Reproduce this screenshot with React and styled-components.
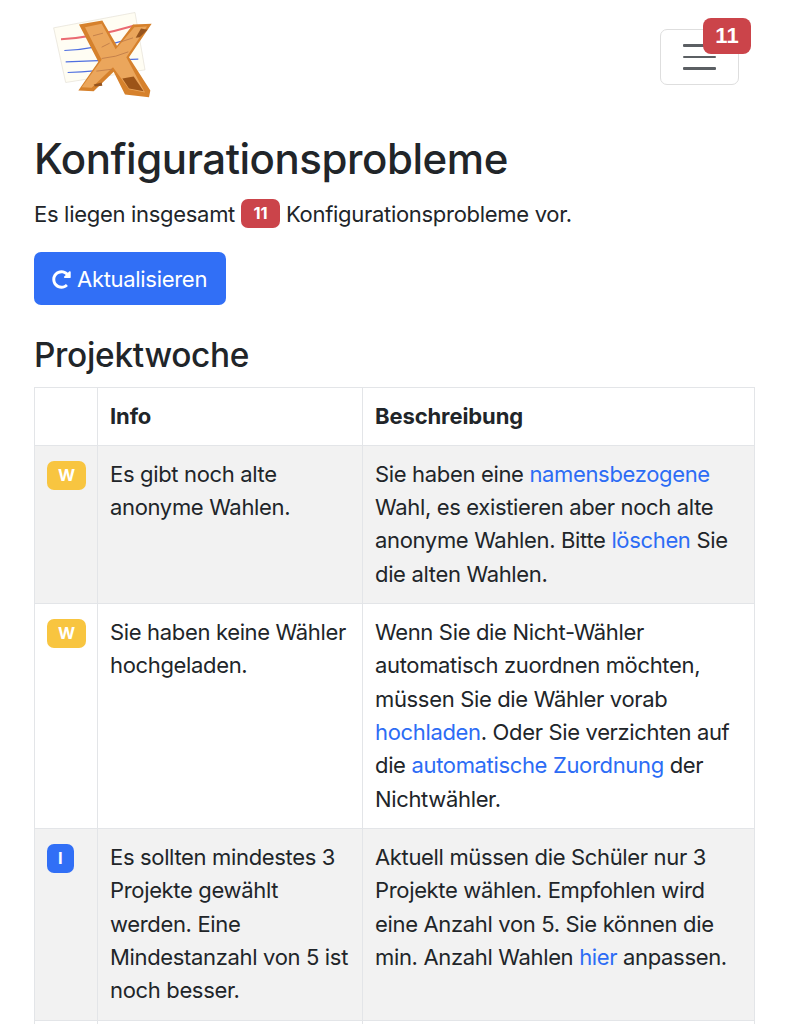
import React from "react";
import styled, { createGlobalStyle } from "styled-components";
import { FaRedoAlt } from "react-icons/fa";

const GlobalStyle = createGlobalStyle`
  html, body {
    margin: 0;
    padding: 0;
    height: 1024px;
    overflow: hidden;
    background: #fff;
  }
  body {
    font-family: Inter, "Liberation Sans", sans-serif;
    font-size: 22px;
    line-height: 33.33px;
    letter-spacing: -0.3px;
    color: #212529;
  }
`;

const NavBar = styled.nav`
  display: flex;
  align-items: flex-start;
  justify-content: space-between;
  height: 132px;
  padding: 12px 52px 0 53px;
  box-sizing: border-box;
`;

const Toggler = styled.button`
  position: relative;
  width: 79px;
  height: 56px;
  margin-top: 17px;
  padding: 0;
  display: flex;
  flex-direction: column;
  align-items: center;
  justify-content: center;
  gap: 9px;
  background: #fff;
  border: 1.5px solid #dedede;
  border-radius: 7px;
`;

const TogglerBar = styled.span`
  display: block;
  width: 33px;
  height: 2.5px;
  background: #5b5f63;
  border-radius: 1px;
`;

const NavBadge = styled.span`
  position: absolute;
  top: -12px;
  right: -13px;
  width: 48px;
  height: 36px;
  display: flex;
  align-items: center;
  justify-content: center;
  background: #cb444a;
  color: #fff;
  border-radius: 8px;
  font-size: 22px;
  font-weight: 700;
  letter-spacing: 0;
`;

const Main = styled.main`
  padding: 0 36px 0 34px;
`;

const Title = styled.h1`
  margin: 0 0 12px;
  font-size: 42px;
  line-height: 54px;
  font-weight: 500;
  letter-spacing: -0.45px;
`;

const Lead = styled.p`
  margin: 0 0 21px;
`;

const Pill = styled.span`
  display: inline-flex;
  align-items: center;
  justify-content: center;
  vertical-align: ${(p) => p.$raise || 1}px;
  height: 29px;
  padding: 0 ${(p) => p.$pad || 11}px;
  border-radius: 7px;
  background: ${(p) => p.$bg};
  color: #fff;
  font-size: 16.5px;
  line-height: 29px;
  font-weight: 700;
  letter-spacing: 0;
`;

const RefreshButton = styled.button`
  display: flex;
  align-items: center;
  gap: 6px;
  height: 53px;
  width: 192px;
  padding: 2px 0 0 18px;
  box-sizing: border-box;
  background: #316ff6;
  color: #fff;
  border: 0;
  border-radius: 7px;
  font: inherit;
  letter-spacing: inherit;
`;

const Subtitle = styled.h2`
  margin: 30px 0 12px;
  font-size: 33.4px;
  line-height: 40px;
  font-weight: 500;
  letter-spacing: -0.3px;
`;

const Table = styled.table`
  width: 721px;
  border-collapse: collapse;
  table-layout: fixed;
`;

const Row = styled.tr`
  background: ${(p) => (p.$striped ? "#f2f2f2" : "#fff")};
`;

const Cell = styled.td`
  border: 1px solid #e3e5e8;
  padding: 12px;
  vertical-align: top;
  letter-spacing: -0.34px;
`;

const HeadCell = styled(Cell).attrs({ as: "th" })`
  padding-bottom: 11px;
  text-align: left;
  font-weight: 700;
  font-size: 22px;
  letter-spacing: -0.1px;
`;

const Link = styled.a`
  color: #2c6cf5;
  text-decoration: none;
`;

function Logo() {
  return (
    <svg width="100" height="87" viewBox="70 35 300 260">
      <polygon points="72,82 316,36 346,208 108,246" fill="#fffdf3" stroke="#e4e0d4" strokeWidth="2" />
      <path d="M94 116 Q190 112 312 76" fill="none" stroke="#ea6a72" strokeWidth="6" />
      <path d="M104 150 Q200 146 312 112" fill="none" stroke="#4f6fe0" strokeWidth="3.5" />
      <path d="M108 184 Q210 180 326 176" fill="none" stroke="#4f6fe0" strokeWidth="3.5" />
      <path d="M114 216 Q200 214 260 200" fill="none" stroke="#4f6fe0" strokeWidth="3.5" />
      <polygon
        points="148,72 218,60 262,136 310,72 366,70 298,170 362,270 358,290 286,282 252,214 192,272 146,270 206,184"
        fill="#d6812c"
      />
      <polygon
        points="166,80 216,70 258,146 314,80 352,78 290,170 346,276 298,266 250,200 186,262 156,260 216,178"
        fill="#eba65c"
      />
      <path d="M190 106 L220 98 M216 140 L240 128 M274 124 L310 112 M216 174 Q260 170 296 154 M200 212 L248 206" fill="none" stroke="#bd7a48" strokeWidth="2.5" />
      <polygon points="318,112 334,84 354,88 330,110" fill="#96541e" />
      <polygon points="278,234 312,228 342,272 298,264" fill="#9c5418" />
      <polygon points="192,252 216,246 218,256 196,258" fill="#96541e" />
    </svg>
  );
}

export default function App() {
  return (
    <>
      <GlobalStyle />
      <NavBar>
        <Logo />
        <Toggler>
          <TogglerBar />
          <TogglerBar />
          <TogglerBar />
          <NavBadge>11</NavBadge>
        </Toggler>
      </NavBar>
      <Main>
        <Title>Konfigurationsprobleme</Title>
        <Lead>
          Es liegen insgesamt <Pill $bg="#cb444a" $pad={12.5} $raise={3}>11</Pill> Konfigurationsprobleme vor.
        </Lead>
        <RefreshButton>
          <FaRedoAlt size={19} />
          Aktualisieren
        </RefreshButton>
        <Subtitle>Projektwoche</Subtitle>
        <Table>
          <colgroup>
            <col style={{ width: 63 }} />
            <col style={{ width: 265 }} />
            <col />
          </colgroup>
          <tbody>
            <Row>
              <HeadCell />
              <HeadCell>Info</HeadCell>
              <HeadCell>Beschreibung</HeadCell>
            </Row>
            <Row $striped>
              <Cell><Pill $bg="#f8c540">W</Pill></Cell>
              <Cell>Es gibt noch alte anonyme Wahlen.</Cell>
              <Cell>
                Sie haben eine <Link>namensbezogene</Link> Wahl, es existieren aber noch alte anonyme Wahlen. Bitte <Link>löschen</Link> Sie die alten Wahlen.
              </Cell>
            </Row>
            <Row>
              <Cell><Pill $bg="#f8c540">W</Pill></Cell>
              <Cell>Sie haben keine Wähler hochgeladen.</Cell>
              <Cell>
                Wenn Sie die Nicht-Wähler automatisch zuordnen möchten, müssen Sie die Wähler vorab <Link>hochladen</Link>. Oder Sie verzichten auf die <Link>automatische Zuordnung</Link> der Nichtwähler.
              </Cell>
            </Row>
            <Row $striped>
              <Cell><Pill $bg="#316ff6">I</Pill></Cell>
              <Cell>Es sollten mindestes 3 Projekte gewählt werden. Eine Mindestanzahl von 5 ist noch besser.</Cell>
              <Cell>
                Aktuell müssen die Schüler nur 3 Projekte wählen. Empfohlen wird eine Anzahl von 5. Sie können die min. Anzahl Wahlen <Link>hier</Link> anpassen.
              </Cell>
            </Row>
            <Row>
              <Cell />
              <Cell />
              <Cell />
            </Row>
          </tbody>
        </Table>
      </Main>
    </>
  );
}
